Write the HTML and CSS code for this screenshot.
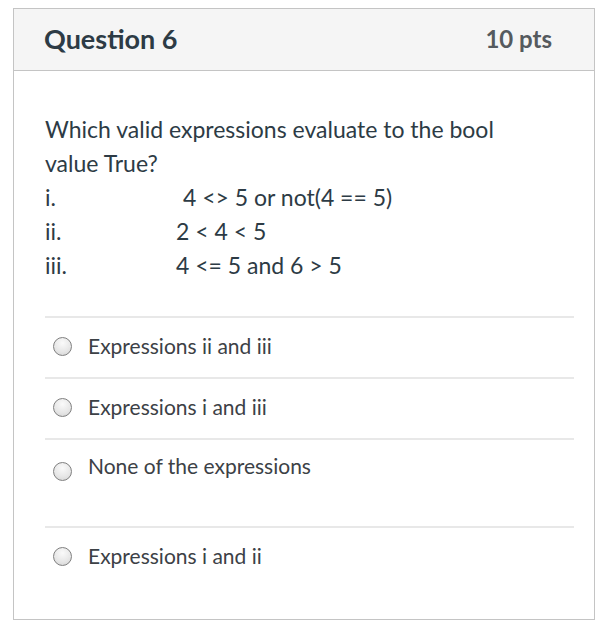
FILE: index.html
```html
<!DOCTYPE html>
<html>
<head>
<meta charset="utf-8">
<link rel="stylesheet" href="styles.css">
</head>
<body>
<div class="page">
  <div class="card">
    <div class="header">
      <span class="title">Question 6</span>
      <span class="pts">10 pts</span>
    </div>
    <div class="body">
      <div class="question">
        <p>Which valid expressions evaluate to the bool value True?</p>
        <div class="expr"><span class="num">i.</span><span class="code first">4 &lt;&gt; 5 or not(4 == 5)</span></div>
        <div class="expr"><span class="num">ii.</span><span class="code">2 &lt; 4 &lt; 5</span></div>
        <div class="expr"><span class="num">iii.</span><span class="code">4 &lt;= 5 and 6 &gt; 5</span></div>
      </div>
      <div class="answers">
        <label class="answer"><span class="radio"></span><span class="label">Expressions ii and iii</span></label>
        <label class="answer"><span class="radio"></span><span class="label">Expressions i and iii</span></label>
        <label class="answer tall"><span class="radio low"></span><span class="label">None of the expressions</span></label>
        <label class="answer"><span class="radio"></span><span class="label">Expressions i and ii</span></label>
      </div>
    </div>
  </div>
</div>
</body>
</html>
```

FILE: styles.css
```css
html, body {
  margin: 0;
  padding: 0;
  background: #ffffff;
}

body {
  font-family: Lato, "Open Sans", "Liberation Sans", sans-serif;
  color: #2d3b45;
}

.page {
  padding: 8px 0 0 13px;
}

.card {
  width: 582px;
  height: 612px;
  border: 1px solid #c4c4c4;
  box-sizing: border-box;
  background: #ffffff;
}

.header {
  height: 62px;
  background: #f5f5f5;
  border-bottom: 1px solid #c4c4c4;
  display: flex;
  align-items: center;
  justify-content: space-between;
  padding: 0 42px 2px 30px;
  box-sizing: border-box;
}

.title {
  font-size: 27px;
  font-weight: 700;
  color: #2d3b45;
}

.pts {
  font-size: 24px;
  font-weight: 700;
  color: #555a5e;
}

.body {
  padding: 41px 20px 0 31px;
}

.question {
  font-size: 23px;
  line-height: 34px;
  color: #2d3b45;
  width: 480px;
}

.question p {
  margin: 0;
}

.expr {
  display: flex;
}

.num {
  width: 131px;
  flex: none;
}

.code.first {
  margin-left: 7px;
}

.answers {
  margin-top: 34px;
}

.answer {
  display: flex;
  align-items: center;
  border-top: 2px solid #e8e8e8;
  padding: 16px 0 19px 0;
  height: 24px;
  box-sizing: content-box;
}

.answer.tall {
  align-items: flex-start;
  padding: 14px 0 48px 0;
}

.radio {
  width: 19px;
  height: 19px;
  border-radius: 50%;
  border: 1.5px solid #808080;
  background: radial-gradient(circle at 50% 30%, #fafafa 0%, #e6e6e6 60%, #d0d0d0 100%);
  box-sizing: border-box;
  margin: 0 16px 0 8px;
  flex: none;
}

.radio.low {
  margin-top: 8px;
}

.label {
  font-size: 21px;
  line-height: 24px;
  color: #3c4146;
}
```
